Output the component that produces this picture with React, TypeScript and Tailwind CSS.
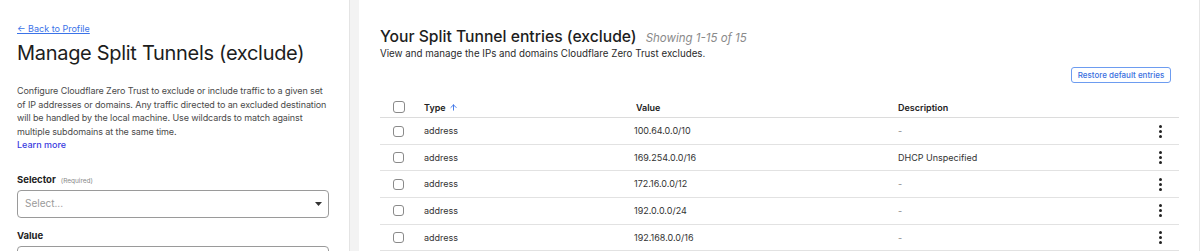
import { ArrowUp } from "lucide-react";

type Entry = {
  type: string;
  value: string;
  description: string;
};

const entries: Entry[] = [
  { type: "address", value: "100.64.0.0/10", description: "-" },
  { type: "address", value: "169.254.0.0/16", description: "DHCP Unspecified" },
  { type: "address", value: "172.16.0.0/12", description: "-" },
  { type: "address", value: "192.0.0.0/24", description: "-" },
  { type: "address", value: "192.168.0.0/16", description: "-" },
];

function Checkbox({ big }: { big?: boolean }) {
  return (
    <div
      className={
        big
          ? "h-[12px] w-[12px] rounded-[3px] border border-[#8a8a8a] bg-white"
          : "h-[11px] w-[11px] rounded-[3px] border border-[#8a8a8a] bg-white"
      }
    />
  );
}

function Kebab() {
  return (
    <div className="flex flex-col items-center gap-[2px]">
      <span className="h-[3px] w-[3px] rounded-full bg-[#222]" />
      <span className="h-[3px] w-[3px] rounded-full bg-[#222]" />
      <span className="h-[3px] w-[3px] rounded-full bg-[#222]" />
    </div>
  );
}

function SidePanel() {
  return (
    <div className="w-[349px] shrink-0 bg-white pl-[17px] pr-[20px] pt-[23px]">
      <a className="block text-[9px] leading-[12px] text-[#3b73e8] underline">← Back to Profile</a>
      <h1 className="mt-[5px] text-[20px] leading-[26px] tracking-[-0.3px] text-[#1d1d1d]">
        Manage Split Tunnels (exclude)
      </h1>
      <p className="-mr-[12px] mt-[18px] text-[9px] leading-[13.5px] tracking-[-0.1px] text-[#4a4a4a]">
        Configure Cloudflare Zero Trust to exclude or include traffic to a given set
        <br />
        of IP addresses or domains. Any traffic directed to an excluded destination
        <br />
        will be handled by the local machine. Use wildcards to match against
        <br />
        multiple subdomains at the same time.
      </p>
      <a className="block text-[9px] leading-[13.5px] font-medium text-[#3a3be0]">Learn more</a>
      <div className="mt-[21px] flex h-[14px] items-baseline gap-[5px]">
        <span className="text-[9.5px] leading-[14px] font-bold text-[#222]">Selector</span>
        <span className="text-[6.5px] text-[#888]">(Required)</span>
      </div>
      <div className="mt-[3px] flex h-[28px] items-center justify-between rounded-[4px] border border-[#9a9a9a] pl-[7px] pr-[6px]">
        <span className="text-[10px] text-[#9a9a9a]">Select...</span>
        <svg width="7" height="4" viewBox="0 0 7 4">
          <polygon points="0,0 7,0 3.5,4" fill="#333" />
        </svg>
      </div>
      <div className="mt-[11px] text-[9.5px] leading-[14px] font-bold text-[#222]">Value</div>
      <div className="mt-[3px] h-[28px] rounded-[4px] border border-[#9a9a9a]" />
    </div>
  );
}

function EntriesTable() {
  return (
    <div className="mt-[14px]">
      <div className="grid h-[21px] grid-cols-[44px_212px_262px_1fr_38px] items-center border-b-[1.5px] border-[#dcdcdc] text-[9px] font-semibold text-[#222]">
        <div className="pl-[13px]">
          <Checkbox big />
        </div>
        <div className="flex items-center gap-[3px]">
          Type <ArrowUp className="h-[9px] w-[9px] text-[#3b73e8]" strokeWidth={2.5} />
        </div>
        <div>Value</div>
        <div>Description</div>
        <div />
      </div>
      {entries.map((e) => (
        <div
          key={e.value}
          className="grid h-[26.6px] grid-cols-[44px_212px_262px_1fr_38px] items-center border-b border-[#e2e2e2] text-[9px] text-[#333]"
        >
          <div className="pl-[13px]">
            <Checkbox />
          </div>
          <div>{e.type}</div>
          <div className="-ml-[2px]">{e.value}</div>
          <div className={e.description === "-" ? "text-[#888]" : ""}>{e.description}</div>
          <div className="flex justify-center">
            <Kebab />
          </div>
        </div>
      ))}
    </div>
  );
}

export default function App() {
  return (
    <div className="flex h-[251px] w-[1200px] overflow-hidden bg-white font-['Inter',sans-serif]">
      <SidePanel />
      <div className="w-[10px] shrink-0 border-l border-[#e4e4e4] bg-[#f3f3f3]" />
      <div className="flex-1 border-r border-[#e6e6e6] pl-[21px] pr-[20px] pt-[27px]">
        <div className="flex items-baseline gap-[9px]">
          <h2 className="text-[15.7px] leading-[20px] font-medium text-[#1d1d1d]">Your Split Tunnel entries (exclude)</h2>
          <span className="text-[11.5px] italic text-[#8a8a8a]">Showing 1-15 of 15</span>
        </div>
        <p className="text-[9.75px] leading-[13px] text-[#2a2a2a]">
          View and manage the IPs and domains Cloudflare Zero Trust excludes.
        </p>
        <div className="mt-[7px] flex justify-end pr-[8px]">
          <button className="h-[16px] w-[100px] rounded-[3px] border border-[#6d9cf0] text-[8px] leading-[14px] font-medium text-[#3a6fe0]">
            Restore default entries
          </button>
        </div>
        <EntriesTable />
      </div>
    </div>
  );
}
